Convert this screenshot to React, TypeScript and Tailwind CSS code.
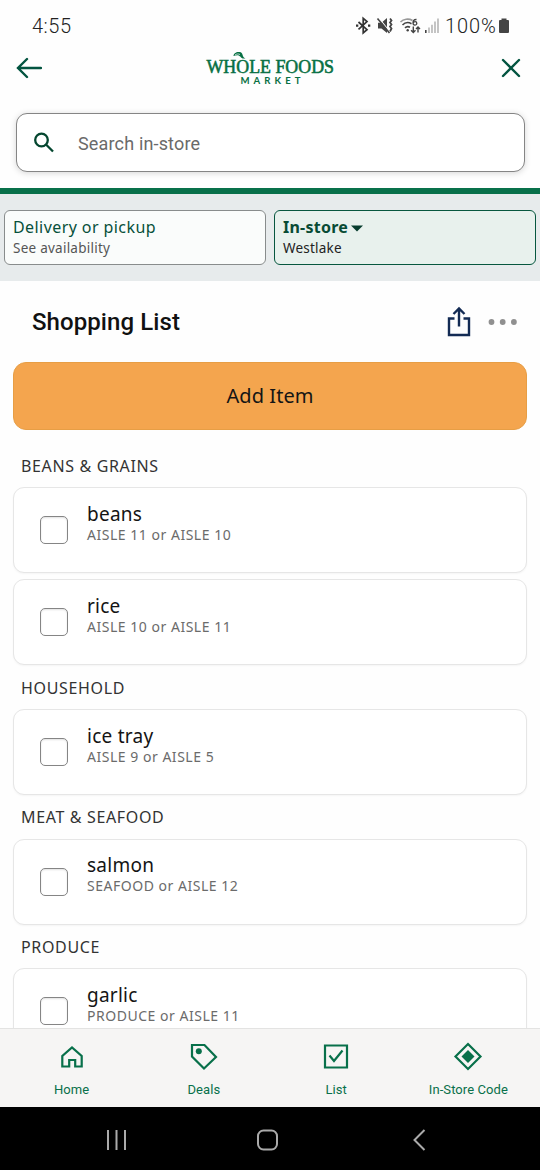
import type { ReactNode } from "react";

type Item = { name: string; aisle: string };
type Section = { title: string; items: Item[] };

const sections: Section[] = [
  {
    title: "BEANS & GRAINS",
    items: [
      { name: "beans", aisle: "AISLE 11 or AISLE 10" },
      { name: "rice", aisle: "AISLE 10 or AISLE 11" },
    ],
  },
  { title: "HOUSEHOLD", items: [{ name: "ice tray", aisle: "AISLE 9 or AISLE 5" }] },
  { title: "MEAT & SEAFOOD", items: [{ name: "salmon", aisle: "SEAFOOD or AISLE 12" }] },
  { title: "PRODUCE", items: [{ name: "garlic", aisle: "PRODUCE or AISLE 11" }] },
];

function StatusBar() {
  return (
    <div className="flex h-[50px] shrink-0 items-center pt-[2px] pl-8 pr-[30px] font-['Roboto',sans-serif] text-[20px] font-light text-[#222]">
      <span className="tracking-[0.5px]">4:55</span>
      <svg className="ml-auto" width="86" height="20" viewBox="352 15.5 86 20" fill="none">
        <g stroke="#333" strokeWidth="1.700">
          <path d="M356.500 21.500l8.500 7.700-3.800 3.300V17.800l3.800 3.300-8.500 7.700" />
          <path d="M354 25.200h2.300M366 25.200h2.300" strokeWidth="2.200" />
        </g>
        <path d="M376 22.300h3.500l5.500-4.800v15l-5.500-4.500H376z" fill="#444" />
        <path d="M376.500 17l12 15" stroke="#fff" strokeWidth="1.200" />
        <path d="M375.500 18l12 14.500" stroke="#444" strokeWidth="1.600" />
        <path d="M388 18l1.500 2-1.500 2 1.500 2-1.500 2 1.500 2-1.500 3" stroke="#444" strokeWidth="1.800" />
        <g stroke="#444" strokeWidth="1.600">
          <path d="M398.500 21.500c3-3 8-3.800 12-1.500" stroke="#999" />
          <path d="M400.500 24.500c2.500-2.600 6-3 9-1.300M403 27.400c1.500-1.500 3.500-1.500 5-.6" />
          <path d="M414.500 19c-2.800-.2-3.500 1.800-3.500 3.200 0 3.300 3.800 3 3.800.5 0-2.200-3.200-2-3.600-.2" strokeWidth="1.300" />
          <path d="M411.300 26v6m-2.200-2.200l2.200 2.200 2.200-2.200M416 32v-5.500m-2 2l2-2 2 2" strokeWidth="1.400" />
        </g>
        <circle cx="405.700" cy="29.800" r="1.200" fill="#444" />
        <path d="M423.800 29.500v3" stroke="#444" strokeWidth="1.600" />
        <path d="M427 27v5.500M430 24.300v8.200M433 21v11.500M436 18v14.500" stroke="#bbb" strokeWidth="1.700" />
      </svg>
      <span className="ml-[5px] w-[53px] tracking-[0.9px]">100%</span>
      <svg width="12" height="16" viewBox="0 0 12 16" fill="#444">
        <path d="M3.500 0.500h5v1.500h1.500q1 0 1 1V14q0 1-1 1H2q-1 0-1-1V3q0-1 1-1h1.500z" />
      </svg>
    </div>
  );
}

function Logo() {
  return (
    <svg width="130" height="38" viewBox="205 49 130 38" fill="#087044" overflow="visible">
      <text x="206.500" y="72.800" fontFamily="Liberation Serif, serif" fontSize="19.500" stroke="#087044" strokeWidth="0.6" textLength="127.500" lengthAdjust="spacingAndGlyphs">
        WHOLE FOODS
      </text>
      <path d="M233.500 56c0-2.500 3-4.600 6-4 2 .3 2.800 1.300 3.200 3.200.5 2 1.700 2.700 2.800 3-2.300 1-4.200-.1-5-1.400-1.500-2-3.800-2-7-.8z" />
      <path d="M235 55c1.500-1.200 3.500-1.300 5-.5" stroke="#fff" strokeWidth=".7" fill="none" />
      <text x="240.500" y="84" fontFamily="Lato, sans-serif" fontWeight="700" fontSize="9.600" textLength="60" lengthAdjust="spacing">
        MARKET
      </text>
    </svg>
  );
}

function Header() {
  return (
    <header className="flex h-[63px] shrink-0 items-start pl-4 pr-[19px]">
      <svg className="mt-[7px]" width="26" height="22" viewBox="0 0 26 22" fill="none" stroke="#035440" strokeWidth="2.400" strokeLinecap="round">
        <path d="M25 11H2M11 2L2 11l9 9" />
      </svg>
      <div className="-mt-px ml-[163px]">
        <Logo />
      </div>
      <svg className="ml-auto mt-[8px]" width="20" height="20" viewBox="0 0 20 20" fill="none" stroke="#035440" strokeWidth="2.400" strokeLinecap="round">
        <path d="M2 2l16 16M18 2L2 18" />
      </svg>
    </header>
  );
}

function Search() {
  return (
    <div className="mx-4 mr-[15px] flex h-[59px] shrink-0 items-center rounded-[11px] border-[1.5px] border-[#858585] bg-white pl-4 shadow-[0_1px_6px_rgba(0,0,0,0.16)]">
      <svg width="22" height="22" viewBox="0 0 22 22" fill="none" stroke="#04462f" strokeWidth="2.300">
        <circle cx="8.500" cy="8" r="6.300" />
        <path d="M13 12.500l7 7" />
      </svg>
      <span className="ml-[23px] pt-[2px] font-['Roboto',sans-serif] text-[18px] tracking-[0.16px] text-[#6a6a6a]">Search in-store</span>
    </div>
  );
}

function StorePicker() {
  return (
    <div className="mt-4 flex h-[93px] shrink-0 gap-2 border-t-[6px] border-[#08704a] bg-[#e7ebec] px-1 pt-4">
      <div className="h-[55px] flex-1 rounded-[6px] border border-[#888c8c] bg-[#fafcfb] pl-2 pt-[6px]">
        <div className="text-[16px] leading-[20px] tracking-[0.42px] text-[#07503a]">Delivery or pickup</div>
        <div className="pt-px text-[13.5px] leading-[20px] tracking-[0.25px] text-[#555]">See availability</div>
      </div>
      <div className="h-[55px] flex-1 rounded-[6px] border border-[#07573f] bg-[#e8f1ed] pl-2 pt-[6px]">
        <div className="flex items-center text-[16px] leading-[20px] font-bold tracking-[0.25px] text-[#074b34]">
          <span>In-store</span>
          <svg className="ml-[3px] mt-[2px]" width="12" height="7" viewBox="0 0 12 7" fill="#073d2e">
            <path d="M0 .5h12L6 6.500z" />
          </svg>
        </div>
        <div className="pt-px text-[13.5px] leading-[20px] tracking-[0.2px] text-[#222]">Westlake</div>
      </div>
    </div>
  );
}

function TitleRow() {
  return (
    <div className="flex h-[81px] shrink-0 items-center pl-8 pr-[22px]">
      <h1 className="font-['Roboto',sans-serif] text-[24px] font-medium tracking-[0.08px] text-[#111]">Shopping List</h1>
      <svg className="ml-auto" width="24" height="32" viewBox="0 0 24 32" fill="none" stroke="#132b54" strokeWidth="2.400">
        <path d="M7.500 12.500H2V29h20V12.500h-5.500M12 20.500V2.500M6.500 8L12 2.500l5.500 5.500" />
      </svg>
      <svg className="ml-[17px]" width="30" height="6" viewBox="0 0 30 6" fill="#909090">
        <circle cx="3.500" cy="3" r="2.900" />
        <circle cx="14.700" cy="3" r="2.900" />
        <circle cx="25.900" cy="3" r="2.900" />
      </svg>
    </div>
  );
}

function ItemCard({ item }: { item: Item }) {
  return (
    <div className="flex h-[86px] shrink-0 rounded-[11px] border border-[#e6e6e6] bg-white pl-[26px] shadow-[0_1px_2px_rgba(0,0,0,0.04)]">
      <div className="mt-[28px] size-[28px] rounded-[5px] border-[1.5px] border-[#858585] shadow-[inset_0_1px_2px_rgba(0,0,0,0.12)]" />
      <div className="ml-[19px] pt-[13.8px]">
        <div className="text-[19px] leading-[24px] tracking-[0.25px] text-[#141414]">{item.name}</div>
        <div className="text-[14px] leading-[18px] tracking-[0.52px] text-[#6b6b6b]">{item.aisle}</div>
      </div>
    </div>
  );
}

function NavItem({ label, children }: { label: string; children: ReactNode }) {
  return (
    <div className="flex w-[132.3px] flex-col items-center">
      <svg width="30" height="30" viewBox="0 0 30 30" fill="none" stroke="#08704a" strokeWidth="2.200">
        {children}
      </svg>
      <span className="mt-[11px] font-['Roboto',sans-serif] text-[13px] leading-[16px] tracking-[0.08px] text-[#08704a]">{label}</span>
    </div>
  );
}

export default function App() {
  return (
    <div className="flex h-[1170px] w-[540px] flex-col overflow-hidden bg-[#fefefe] font-['Noto_Sans',sans-serif]">
      <StatusBar />
      <Header />
      <Search />
      <StorePicker />
      <TitleRow />
      <main className="flex min-h-0 flex-1 flex-col overflow-hidden px-[13px]">
        <button className="mb-[13.8px] h-[68px] shrink-0 rounded-[13px] border border-[#e79e45] bg-[#f4a54e] text-[20px] tracking-[0.08px] text-[#151515]">
          Add Item
        </button>
        {sections.map((section) => (
          <section key={section.title} className="shrink-0">
            <h2 className="h-[43.6px] pl-[8px] pt-[10.2px] text-[16px] leading-[24px] tracking-[0.65px] text-[#333]">{section.title}</h2>
            <div className="flex flex-col gap-[6px]">
              {section.items.map((item) => (
                <ItemCard key={item.name} item={item} />
              ))}
            </div>
          </section>
        ))}
      </main>
      <nav className="flex h-[79px] shrink-0 border-t border-[#e3e3e2] bg-[#f6f5f4] px-[5.5px] pt-[12px]">
        <NavItem label="Home">
          <path d="M5.300 25.500V15L15 6.500l9.700 8.500v10.500h-6.500V19h-6v6.500z" />
        </NavItem>
        <NavItem label="Deals">
          <path d="M3 4h12.500L27 16 15 27.500 3 15.500z" />
          <circle cx="9.800" cy="10.300" r="3" fill="#08704a" stroke="none" />
        </NavItem>
        <NavItem label="List">
          <path d="M4 4.500h22v22H4z" />
          <path d="M8.500 14.500l4.500 5.500 8.500-10.500" />
        </NavItem>
        <NavItem label="In-Store Code">
          <path d="M15 3l12.500 12.500L15 28 2.500 15.500z" />
          <path d="M15 9l6.500 6.500L15 22l-6.500-6.500z" fill="#08704a" stroke="none" />
        </NavItem>
      </nav>
      <footer className="flex h-[63px] shrink-0 items-center bg-black pl-[106px] pt-[3px]">
        <svg width="22" height="22" viewBox="0 0 22 22" stroke="#aaa" strokeWidth="2">
          <path d="M2 1v20M10.500 1v20M19 1v20" />
        </svg>
        <svg className="ml-[128px]" width="22" height="22" viewBox="0 0 22 22" fill="none" stroke="#aaa" strokeWidth="2">
          <rect x="2" y="1.500" width="19" height="19" rx="5.500" />
        </svg>
        <svg className="ml-[133px]" width="17" height="22" viewBox="0 0 17 22" fill="none" stroke="#aaa" strokeWidth="2">
          <path d="M13.500 1L3.500 11l10 10" />
        </svg>
      </footer>
    </div>
  );
}
